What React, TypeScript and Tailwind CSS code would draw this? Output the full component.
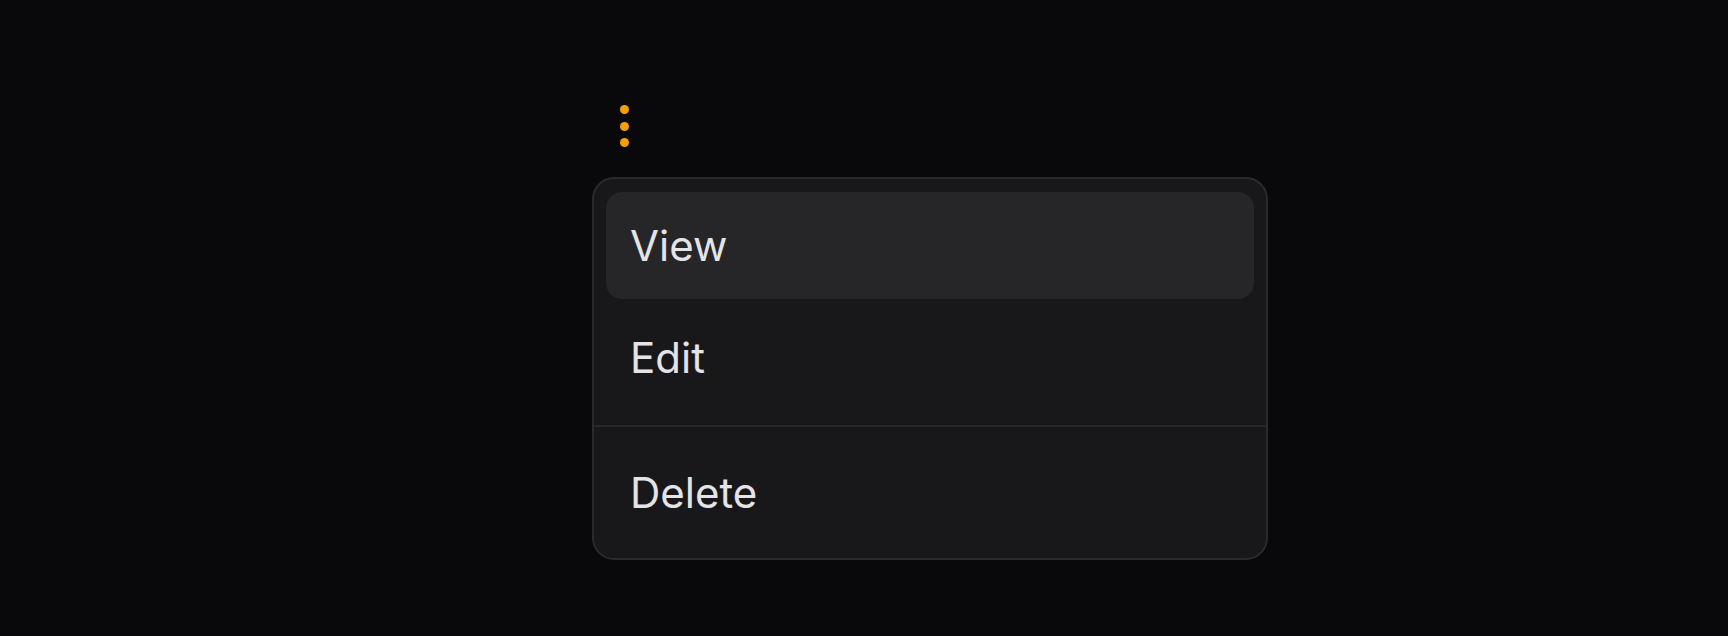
export default function App() {
  const items = ["View", "Edit"];
  return (
    <div
      className="min-h-[636px] w-full bg-[#09090b] pl-[592px] pt-[105px]"
      style={{ fontFamily: "Inter, 'Noto Sans', sans-serif" }}
    >
      <div className="ml-[28px] flex w-[9px] flex-col gap-[7.5px]">
        <span className="block h-[9px] w-[9px] rounded-full bg-[#f59e0b]" />
        <span className="block h-[9px] w-[9px] rounded-full bg-[#f59e0b]" />
        <span className="block h-[9px] w-[9px] rounded-full bg-[#f59e0b]" />
      </div>
      <div className="mt-[30px] flex w-[676px] flex-col rounded-[22px] border-2 border-[#2a2a2e] bg-[#18181b] px-3 pt-[13px] pb-3">
        <div className="flex flex-col gap-[5px]">
          {items.map((label, i) => (
            <div
              key={label}
              className={
                i === 0
                  ? "flex h-[107px] items-center rounded-[16px] bg-[#262629] px-6 text-[42px] text-[#e4e4e7]"
                  : "flex h-[107px] items-center rounded-[16px] px-6 text-[42px] text-[#e4e4e7]"
              }
            >
              {label}
            </div>
          ))}
        </div>
        <div className="-mx-3 mt-[14px] mb-[12px] h-[2px] bg-[#27272a]" />
        <div className="flex h-[107px] items-center rounded-[16px] px-6 text-[42px] text-[#e4e4e7]">
          Delete
        </div>
      </div>
    </div>
  );
}
